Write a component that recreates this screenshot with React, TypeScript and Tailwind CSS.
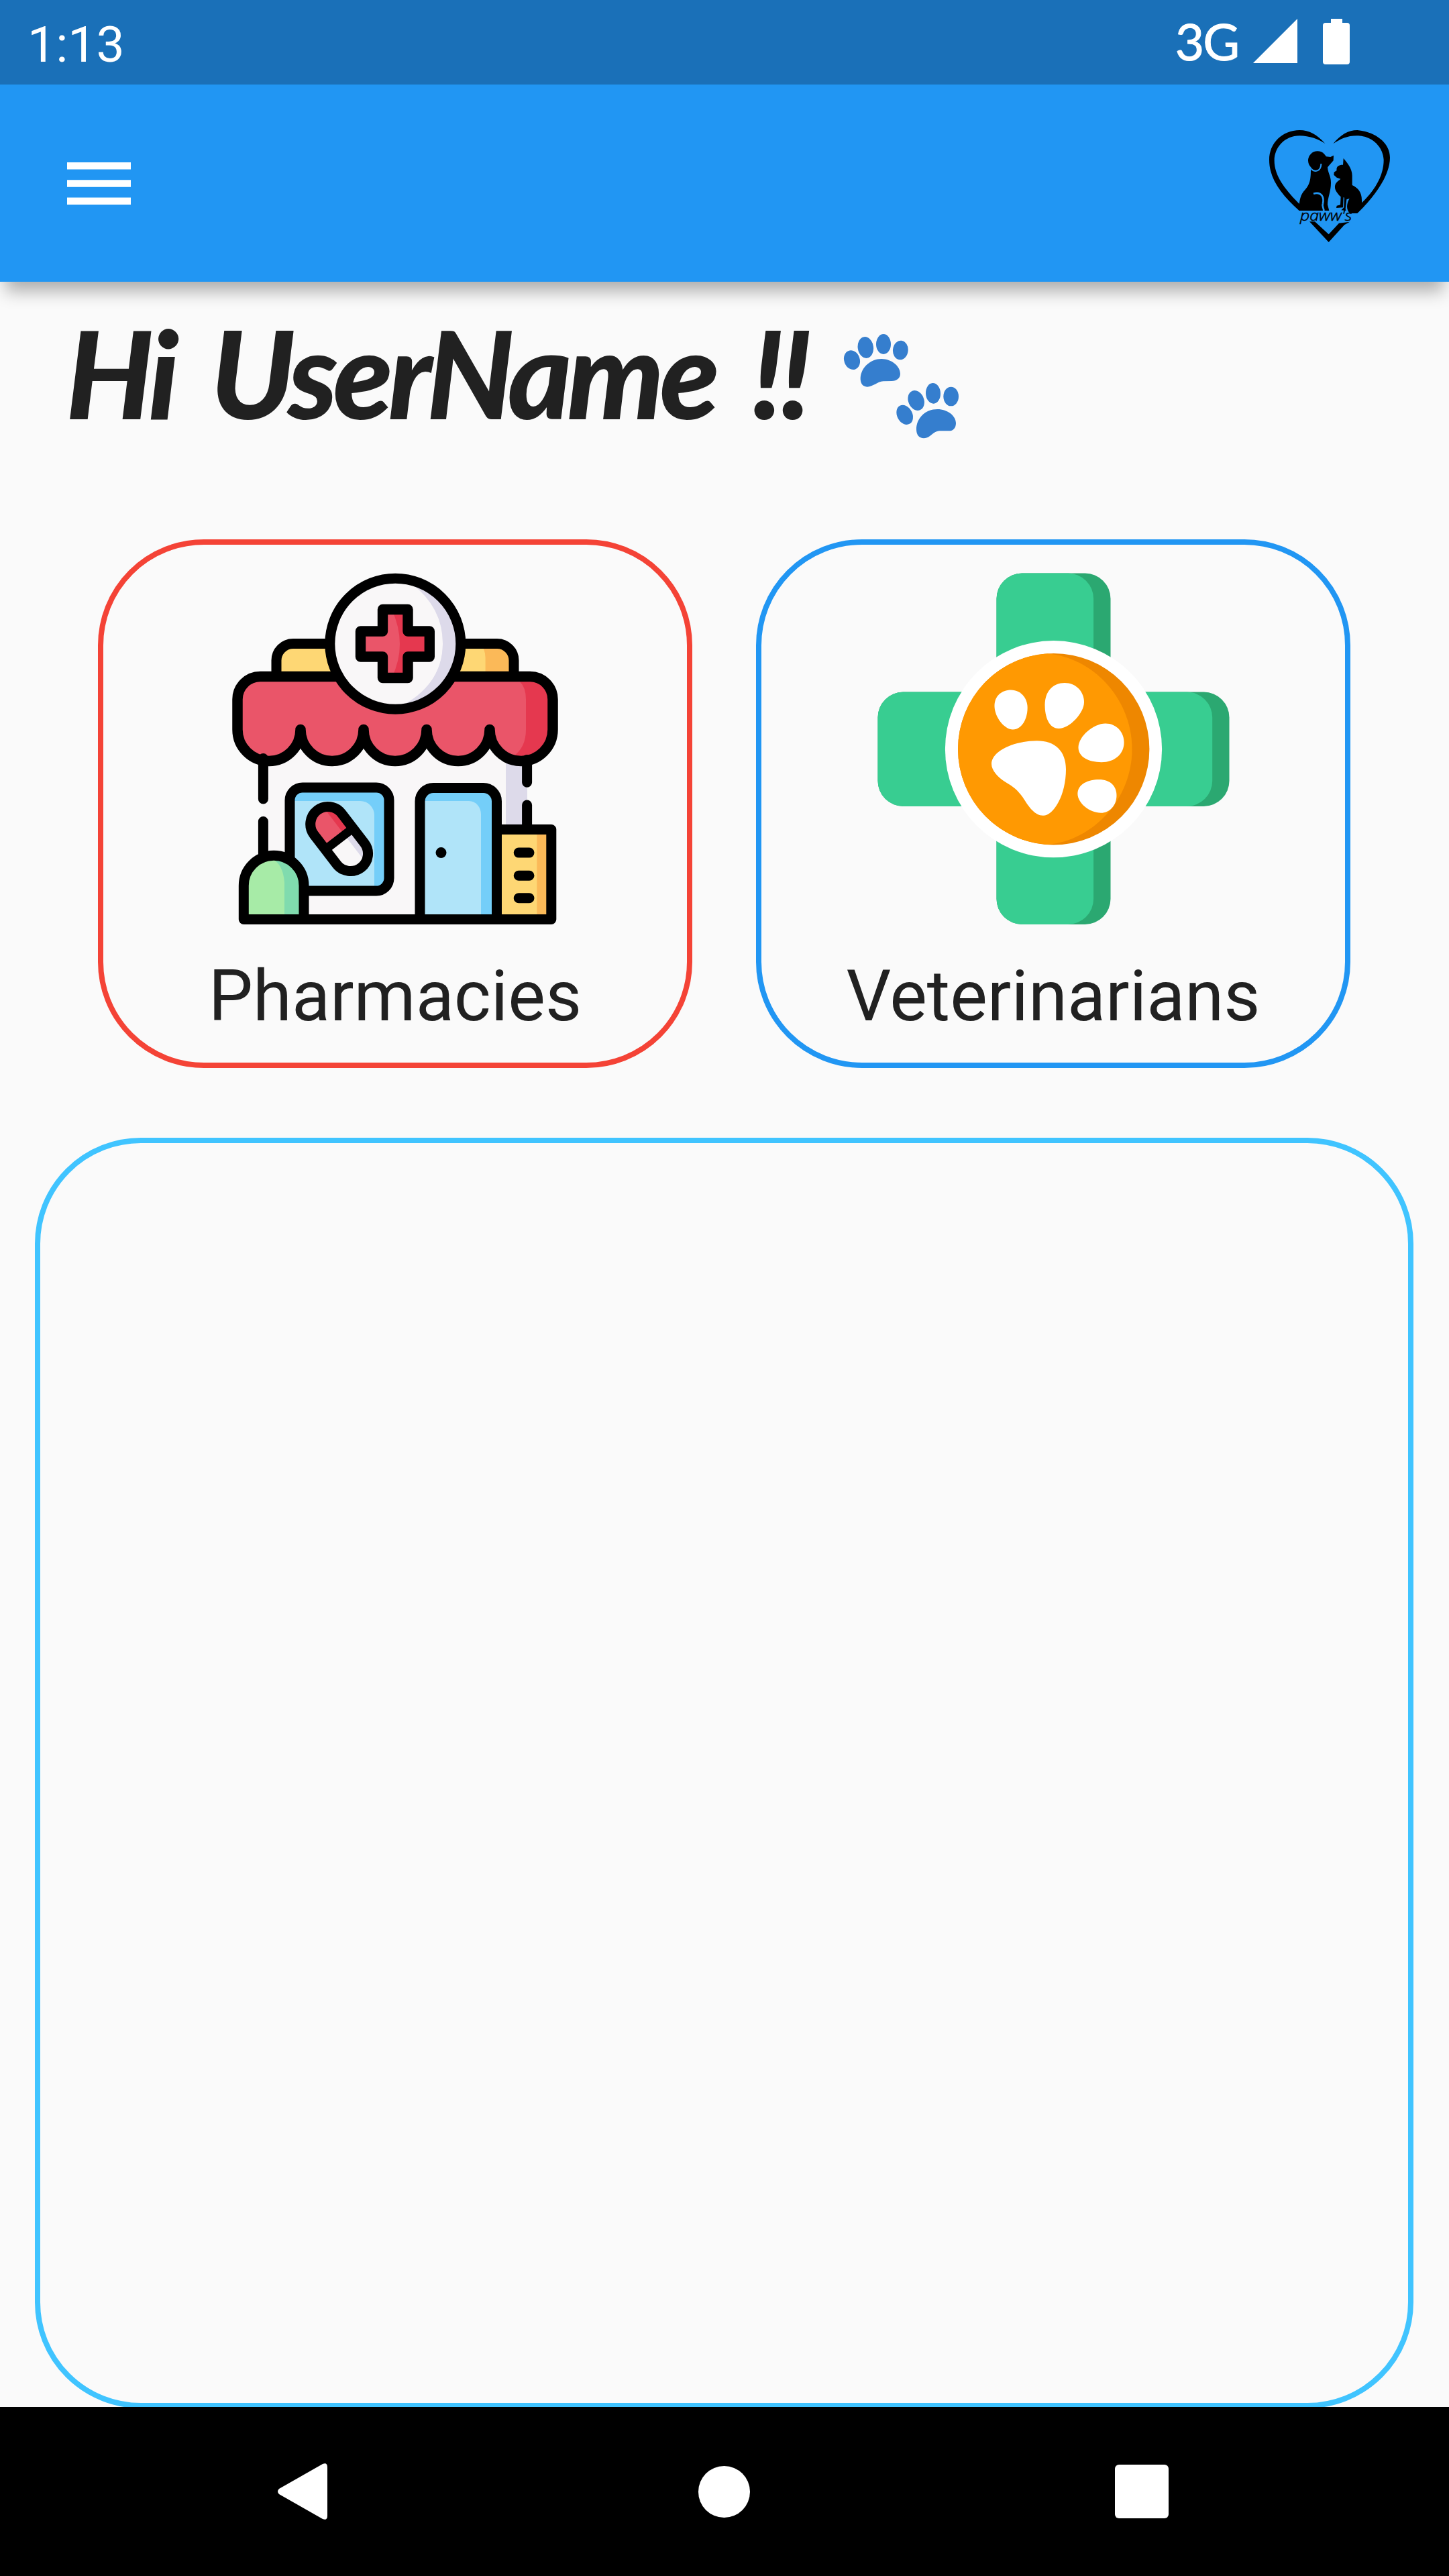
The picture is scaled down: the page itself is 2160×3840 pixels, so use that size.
import type { ReactNode } from "react";

function MenuIcon() {
  return (
    <svg className="h-[63px] w-[95px]" viewBox="0 0 94.5 63" preserveAspectRatio="none" fill="#fff">
      <rect width="94.5" height="10.5" />
      <rect y="26.25" width="94.5" height="10.5" />
      <rect y="52.5" width="94.5" height="10.5" />
    </svg>
  );
}

function Logo() {
  return (
    <svg className="h-[210px] w-[240px]" viewBox="0 -6 720 630">
      <path d="M346 132C310 92 275 72 232 72C155 72 96 130 96 205C96 290 150 360 230 432L262 432C170 345 119 280 119 208C119 150 165 97 232 97C275 97 315 112 346 132Z" />
      <path d="M382 133C415 92 450 72 490 72C565 78 636 125 636 195C636 270 575 362 492 442L505 402C570 340 608 275 608 205C606 150 560 100 495 97C450 95 415 110 382 133Z" />
      <path d="M276 481L300 481L362 538L408 488L456 482L432 496L362 573Z" />
      <circle cx="312" cy="208" r="42" />
      <path d="M318 170L350 190L370 192L384 185L383 208L357 238C358 262 372 278 372 305C373 345 357 375 357 405L364 432L228 432C230 400 232 368 250 346C276 318 282 300 282 248Z" />
      <g fill="none" stroke="#2196f3">
        <path d="M283 244C298 262 328 258 328 222" strokeWidth="6" />
        <path d="M294 356C330 345 342 372 336 400C330 415 340 418 340 432" strokeWidth="8" />
      </g>
      <path d="M428 198C445 218 468 245 467 278L467 318C492 330 510 348 510 385L510 420L490 444L458 444C438 428 442 400 455 378L442 382L437 425L440 432L418 430L430 418L432 374L428 372L426 418L396 420L398 410L414 406L416 370C398 352 388 338 390 322C392 305 405 300 415 290L398 284L385 272L386 260L398 252C394 235 408 226 426 227Z" />
      <text
        x="234"
        y="478"
        textLength="232"
        lengthAdjust="spacingAndGlyphs"
        fontSize="64"
        stroke="#000"
        strokeWidth="1.5"
        className="font-['Open_Sans',sans-serif] font-light italic"
      >
        paww's
      </text>
    </svg>
  );
}

function Paws() {
  return (
    <svg className="h-[190px] w-[240px]" viewBox="0 0 720 570" fill="#357ece">
      <ellipse cx="150" cy="170" rx="35" ry="44" transform="rotate(-20 150 170)" />
      <ellipse cx="211" cy="114" rx="35" ry="48" transform="rotate(-8 211 114)" />
      <ellipse cx="291" cy="99" rx="33" ry="45" />
      <ellipse cx="367" cy="126" rx="34" ry="43" transform="rotate(6 367 126)" />
      <path d="M188 250C190 205 232 165 282 165C328 165 366 198 366 232C366 252 350 264 328 264L290 265C262 267 245 290 218 290C198 290 187 274 188 250Z" />
      <ellipse cx="386" cy="415" rx="34" ry="46" transform="rotate(-28 386 415)" />
      <ellipse cx="437" cy="351" rx="35" ry="46" transform="rotate(-22 437 351)" />
      <ellipse cx="513" cy="319" rx="33" ry="46" transform="rotate(-3 513 319)" />
      <ellipse cx="593" cy="333" rx="34" ry="43" />
      <path d="M438 480C438 430 478 390 532 390C578 390 615 420 615 452C615 474 602 487 584 487L540 487C512 489 500 520 472 520C450 520 438 504 438 480Z" />
    </svg>
  );
}

function PharmacyIcon() {
  return (
    <svg className="h-[525px] w-[525px]" viewBox="7 23.5 525 525">
      <rect x="72" y="290" width="394" height="250" fill="#f9f7f8" />
      <rect x="434" y="290" width="32" height="115" fill="#dddaea" />
      <path d="M92 178V154A25 25 0 0 1 117 129H421A25 25 0 0 1 446 154V178Z" fill="#fed774" />
      <path d="M395 129H421A25 25 0 0 1 446 154V178H403.600V150Q403 135 395 129Z" fill="#fbb958" />
      <path d="M92 178V154A25 25 0 0 1 117 129H421A25 25 0 0 1 446 154V178" fill="none" stroke="#000" strokeWidth="15" />
      <path d="M34 212A34 34 0 0 1 68 178H470A34 34 0 0 1 504 212V257A47 47 0 0 1 410 257A47 47 0 0 1 316 257A47 47 0 0 1 222 257A47 47 0 0 1 128 257A47 47 0 0 1 34 257Z" fill="#ea5569" />
      <path d="M450 178H470A34 34 0 0 1 504 212V257A47 47 0 0 1 457 304C448 304 445 300 445 297Q464 284 464 257V212Q464 190 450 182Z" fill="#e5384f" />
      <path d="M34 212A34 34 0 0 1 68 178H470A34 34 0 0 1 504 212V257A47 47 0 0 1 410 257A47 47 0 0 1 316 257A47 47 0 0 1 222 257A47 47 0 0 1 128 257A47 47 0 0 1 34 257Z" fill="none" stroke="#000" strokeWidth="15.500" strokeLinejoin="round" />
      <circle cx="269.300" cy="129.200" r="97.500" fill="#f9f7f8" />
      <path d="M294 40A101 101 0 0 1 340 129A97 97 0 0 1 275 222A93 93 0 0 0 294 40Z" fill="#dddaea" transform="translate(0 0)" />
      <path d="M294 40A105 105 0 0 1 366 129A97 97 0 0 1 275 224Q340 190 340 129Q340 75 294 40Z" fill="#dddaea" />
      <circle cx="269.300" cy="129.200" r="97.500" fill="none" stroke="#000" strokeWidth="15" />
      <path d="M250.500 78H288V110.500H320.300V148.500H288V180H250.500V148.500H217.500V110.500H250.500Z" fill="#ea5569" />
      <path d="M264 78H288V110.500H320.300V148.500H288V180H264Q288 130 264 78Z" fill="#e5384f" />
      <path d="M250.500 78H288V110.500H320.300V148.500H288V180H250.500V148.500H217.500V110.500H250.500Z" fill="none" stroke="#000" strokeWidth="15.400" strokeLinejoin="round" />
      <rect x="112" y="343.500" width="148" height="154" rx="19" fill="#74cef9" />
      <path d="M112 363.500H217A21 21 0 0 1 238 384.500V497H112Z" fill="#b0e4f9" />
      <rect x="112" y="343.500" width="148" height="154" rx="19" fill="none" stroke="#000" strokeWidth="15" />
      <g transform="rotate(52.500 185.600 420)">
        <path d="M185.600 394H158A26 26 0 0 0 158 446H185.600Z" fill="#ea5569" />
        <path d="M185.600 394H158Q142 394 134 410H185.600Z" fill="#e5384f" />
        <path d="M185.600 394H213.500A26 26 0 0 1 213.500 446H185.600Z" fill="#f9f7f8" />
        <path d="M185.600 394H213.500Q229 394 237 410H185.600Z" fill="#dddaea" />
        <rect x="131.900" y="394" width="107.500" height="52" rx="26" fill="none" stroke="#000" strokeWidth="15" />
        <path d="M185.600 394V446" stroke="#000" strokeWidth="13" />
      </g>
      <path d="M306 540V364A20 20 0 0 1 326 344H400.500A20 20 0 0 1 420.500 364V540Z" fill="#74cef9" />
      <path d="M306 363.500H379A18 20 0 0 1 397 383.500V540H306Z" fill="#b0e4f9" />
      <rect x="420.500" y="406" width="81.300" height="134" fill="#fed774" />
      <rect x="480.400" y="406" width="21.400" height="134" fill="#fbb958" />
      <path d="M43.300 540V489.700A44.850 44.850 0 0 1 133 489.700V540Z" fill="#a7eba7" />
      <path d="M88 444.800A44.850 44.850 0 0 1 133 489.700V540H104V485Q102 458 86 450Z" fill="#80dbae" />
      <g fill="none" stroke="#000" strokeWidth="15" strokeLinejoin="round" strokeLinecap="round">
        <path d="M306 540V364A20 20 0 0 1 326 344H400.500A20 20 0 0 1 420.500 364V540" />
        <path d="M420.500 406H501.800V540H43.300V489.700A44.850 44.850 0 0 1 133 489.700V540" />
        <path d="M72.400 300V360.400M72.400 394V442M465.600 302V335.700M465.600 369.500V402" />
        <path d="M453.200 440.600H469M453.200 474.700H469M453.200 508.200H469" />
      </g>
      <circle cx="337.500" cy="440.600" r="8" />
    </svg>
  );
}

function VetIcon() {
  return (
    <svg className="h-[525px] w-[525px]" viewBox="27.500 23.500 525 525">
      <rect x="205" y="24" width="170" height="523.500" rx="38" fill="#2ba871" />
      <rect x="205" y="24" width="144.600" height="523.500" rx="38" fill="#38cd91" />
      <rect x="28" y="201" width="524" height="170.500" rx="38" fill="#2ba871" />
      <rect x="28" y="201" width="498.700" height="170.500" rx="38" fill="#38cd91" />
      <circle cx="290" cy="286.200" r="161.600" fill="#fff" />
      <circle cx="290.200" cy="286.200" r="142.700" fill="#ee8700" />
      <path d="M281 143.800C350 150 407 212 407 286.200C407 360 350 422 281 428.600A142.700 142.700 0 0 1 281 143.800Z" fill="#ff9902" />
      <g transform="scale(.3699 .3635)" fill="#fff">
        <path d="M546 610C546 570 575 545 612 545C652 545 679 578 679 618C679 660 658 707 620 707C585 707 546 655 546 610Z" />
        <path d="M749 606C749 550 782 516 829 516C875 516 907 552 907 595C907 640 848 703 805 703C765 703 749 655 749 606Z" />
        <path d="M884 780C884 735 945 682 993 682C1040 682 1068 720 1068 760C1068 808 1030 841 977 841C925 841 884 820 884 780Z" />
        <path d="M881 970C881 930 925 912 967 912C1012 912 1038 938 1038 978C1038 1018 1010 1049 975 1049C930 1049 881 1010 881 970Z" />
        <path d="M534 848C534 795 625 753 717 753C790 753 834 795 834 870C834 975 785 1060 742 1060C708 1060 685 1025 660 985C640 955 620 940 590 922C560 903 534 875 534 848Z" />
      </g>
    </svg>
  );
}

function Card({ label, border, children }: { label: string; border: string; children: ReactNode }) {
  return (
    <div className={`flex h-[788px] w-[886px] flex-col items-center rounded-[158px] border-8 pt-[42px] ${border}`}>
      {children}
      <span className="mt-[45px] text-[105px] leading-[124px] text-[#212121]">{label}</span>
    </div>
  );
}

export default function App() {
  return (
    <div className="flex h-[3840px] w-[2160px] flex-col overflow-hidden bg-[#fafafa] font-['Roboto',sans-serif]">
      <div className="flex h-[126px] shrink-0 items-start justify-between bg-[#1a70b8] pr-[148px] pl-[41px] text-white">
        <span className="pt-[22px] text-[75px] leading-[88px]">1:13</span>
        <div className="flex items-start">
          <span className="pt-[17px] font-['Lato',sans-serif] text-[75px] leading-[88px] tracking-[-2px] [-webkit-text-stroke:1px_white]">3G</span>
          <svg className="mt-[28px] ml-[22px] h-[66px] w-[66px]" viewBox="0 0 66 66" fill="#fff">
            <path d="M66 0V66H0Z" />
          </svg>
          <svg className="mt-[28px] ml-[38px] h-[68px] w-[40px]" viewBox="0 0 40 68" fill="#fff">
            <path d="M12 0H29V6H36Q40 6 40 10V64Q40 68 36 68H4Q0 68 0 64V10Q0 6 4 6H12Z" />
          </svg>
        </div>
      </div>
      <header className="z-10 flex h-[294px] shrink-0 items-center justify-between bg-[#2196f3] pr-[60px] pl-[100px] shadow-[0_22px_24px_-8px_rgba(0,0,0,0.31)]">
        <MenuIcon />
        <Logo />
      </header>
      <main className="flex min-h-0 flex-1 flex-col overflow-hidden">
        <div className="flex h-[384px] shrink-0 items-start pl-[98px]">
          <h1 className="w-[1122px] pt-[32px] font-['Lato',sans-serif] text-[182px] leading-[206px] font-black tracking-[-7px] [word-spacing:22px] whitespace-nowrap text-[#212121] italic">
            Hi UserName !!
          </h1>
          <div className="pt-[60px]">
            <Paws />
          </div>
        </div>
        <div className="flex shrink-0 justify-between pr-[147px] pl-[146px]">
          <Card label="Pharmacies" border="border-[#f44336]">
            <PharmacyIcon />
          </Card>
          <Card label="Veterinarians" border="border-[#2196f3]">
            <VetIcon />
          </Card>
        </div>
        <div className="mt-[104px] mr-[53px] ml-[52px] h-[1894px] shrink-0 rounded-[158px] border-8 border-[#40c4ff]" />
      </main>
      <nav className="flex h-[252px] shrink-0 items-center justify-between bg-black pr-[418px] pl-[413px]">
        <svg className="h-[84px] w-[76px]" viewBox="0 0 76 84" fill="#fff">
          <path d="M68 1Q75 -2 75 6V78Q75 86 68 83L3 46Q-1 42 3 38Z" />
        </svg>
        <div className="ml-[8px] size-[77px] rounded-full bg-white" />
        <div className="size-[80px] rounded-[6px] bg-white" />
      </nav>
    </div>
  );
}
